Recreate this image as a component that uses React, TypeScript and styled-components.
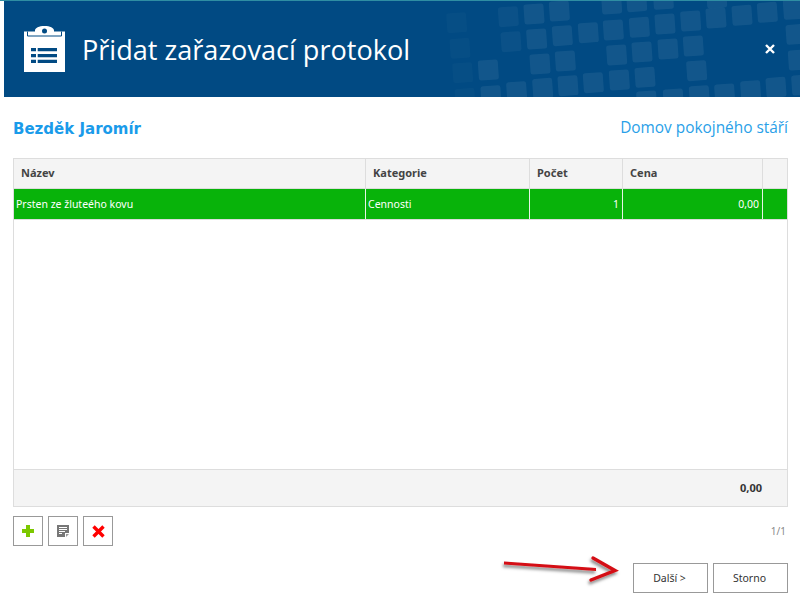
import styled, { createGlobalStyle } from "styled-components";

const squares: [number, number][] = [
  [80, 68], [235, 50], [312, 42], [388, 33], [545, 12], [620, 5], [700, -2], [860, -6],
  [475, 98], [550, 90], [628, 82], [705, 72], [782, 63], [858, 54], [936, 46], [1012, 37], [1090, 28],
  [90, 145], [243, 125], [320, 117], [397, 107], [1098, 103],
  [560, 165], [636, 156], [714, 147], [790, 138],
  [98, 218], [175, 210], [330, 192], [406, 183], [1105, 180],
  [800, 212],
  [260, 275], [338, 265], [414, 257], [490, 248], [568, 240], [645, 232],
  [105, 295], [183, 287], [650, 303], [730, 297], [808, 287], [884, 282], [962, 272], [1038, 262], [1115, 255],
];

const Global = createGlobalStyle`
  html, body {
    margin: 0;
    background: #fff;
  }
  body {
    font-family: "Noto Sans", "Liberation Sans", sans-serif;
    font-size: 10.5px;
    color: #333;
  }
`;

const App = () => {
  return (
    <>
      <Global />
      <Page>
        <Header>
          <Pattern viewBox="0 0 370 96" width="370" height="96">
            {squares.map(([x, y]) => (
              <rect
                key={`${x}-${y}`}
                x={x / 3 - 10}
                y={y / 3 - 11}
                width="20"
                height="20"
                rx="2.5"
                fill="#fff"
                opacity={x < 120 ? 0.025 : x < 300 && y < 130 ? 0.045 : 0.07}
                transform={`rotate(-4 ${x / 3} ${y / 3 - 1})`}
              />
            ))}
          </Pattern>
          <ClipboardIcon />
          <Title>Přidat zařazovací protokol</Title>
          <CloseButton>
            <svg width="10" height="10" viewBox="0 0 10 10">
              <path d="M1 1 9 9M9 1 1 9" stroke="#fff" strokeWidth="2.4" />
            </svg>
          </CloseButton>
        </Header>
        <Content>
          <InfoRow>
            <PersonName>Bezděk Jaromír</PersonName>
            <Facility>Domov pokojného stáří</Facility>
          </InfoRow>
          <TablePanel>
            <HeadRow>
              <HeadCell>Název</HeadCell>
              <HeadCell>Kategorie</HeadCell>
              <HeadCell>Počet</HeadCell>
              <HeadCell>Cena</HeadCell>
              <HeadCell />
            </HeadRow>
            <DataRow>
              <DataCell>Prsten ze žluteého kovu</DataCell>
              <DataCell>Cennosti</DataCell>
              <DataCell $right>1</DataCell>
              <DataCell $right>0,00</DataCell>
              <DataCell />
            </DataRow>
            <TableBody />
            <Summary>0,00</Summary>
          </TablePanel>
          <Toolbar>
            <IconButton aria-label="Přidat">
              <svg width="12" height="12" viewBox="0 0 12 12">
                <path d="M4 0h4v4h4v4H8v4H4V8H0V4h4z" fill="#7cc800" />
              </svg>
            </IconButton>
            <IconButton aria-label="Upravit">
              <svg width="12" height="12" viewBox="0 0 12 12">
                <path d="M0 0h12v8L8 12H0z" fill="#777" />
                <path d="M2 2h8v1H2zM2 4h8v1H2zM2 6h6v1H2zM2 8h3v1H2z" fill="#fff" />
                <path d="M8 12V8h4v1H9v3z" fill="#fff" />
                <path d="M9 9h3l-3 3z" fill="#999" />
              </svg>
            </IconButton>
            <IconButton aria-label="Smazat">
              <svg width="13" height="13" viewBox="0 0 13 13">
                <path d="M1.500 1.500 11.500 11.500M11.500 1.500 1.500 11.500" stroke="#f00" strokeWidth="3.400" />
              </svg>
            </IconButton>
            <PageInfo>1/1</PageInfo>
          </Toolbar>
          <Footer>
            <Arrow viewBox="0 0 124 36" width="124" height="36">
              <defs>
                <filter id="arrow-shadow" x="-10%" y="-30%" width="120%" height="170%">
                  <feDropShadow dx="-1" dy="2.500" stdDeviation="1.800" floodColor="#000" floodOpacity="0.5" />
                </filter>
              </defs>
              <g filter="url(#arrow-shadow)">
                <path d="M5 6.500 L97 13 L97 16 L5 9.500 Z" fill="#d40d12" />
                <path
                  d="M94 3 L116 15.500 L92 25"
                  fill="none"
                  stroke="#d40d12"
                  strokeWidth="3.400"
                  strokeLinecap="round"
                />
              </g>
            </Arrow>
            <ActionButton>Další &gt;</ActionButton>
            <ActionButton>Storno</ActionButton>
          </Footer>
        </Content>
      </Page>
    </>
  );
};

export default App;

const ClipboardIcon = () => (
  <ClipboardSvg viewBox="0 0 41 46" width="41" height="46">
    <path d="M0 5.500h11V4.500C11 2 15 0 20.500 0S30 2 30 4.500v1h11V46H0z" fill="#fff" />
    <circle cx="20.500" cy="5" r="2.500" fill="#014a83" />
    <path d="M3.500 5.500v4.500h34V5.500" fill="none" stroke="#014a83" strokeWidth="1" />
    <path
      d="M7 22h5v3.300H7zM13.700 22H33v3.300H13.700zM7 28h5v3.300H7zM13.700 28H33v3.300H13.700zM7 33.700h5V37H7zM13.700 33.700H33V37H13.700z"
      fill="#014a83"
    />
  </ClipboardSvg>
);

const Page = styled.div`
  width: 800px;
  height: 603px;
  box-sizing: border-box;
  border-top: 1px solid #2f8ea3;
  overflow: hidden;
  position: relative;
`;

const Header = styled.header`
  position: relative;
  height: 96px;
  margin-left: 4px;
  padding-left: 20px;
  display: flex;
  align-items: center;
  background: #014a83;
  overflow: hidden;
`;

const Pattern = styled.svg`
  position: absolute;
  top: 0;
  right: 0;
`;

const ClipboardSvg = styled.svg`
  position: relative;
  flex: none;
  margin-right: 17px;
`;

const Title = styled.h1`
  position: relative;
  margin: 0;
  font-family: "Open Sans", "Noto Sans", sans-serif;
  font-size: 27.100px;
  font-weight: 400;
  color: #fff;
`;

const CloseButton = styled.button`
  position: relative;
  margin-left: auto;
  margin-right: 25px;
  padding: 0;
  border: 0;
  background: none;
  width: 10px;
  height: 10px;
  display: flex;
`;

const Content = styled.main`
  padding: 0 12px 0 13px;
`;

const InfoRow = styled.div`
  height: 61px;
  display: flex;
  align-items: center;
  justify-content: space-between;
`;

const PersonName = styled.div`
  padding-top: 2px;
  font-family: "DejaVu Sans", sans-serif;
  font-size: 15px;
  font-weight: 700;
  color: #1a9bea;
`;

const Facility = styled.div`
  font-family: "Open Sans", "Noto Sans", sans-serif;
  font-size: 15.400px;
  color: #2a9fe8;
`;

const TablePanel = styled.div`
  height: 349px;
  box-sizing: border-box;
  border: 1px solid #ddd;
  display: flex;
  flex-direction: column;
`;

const columns = "352px 164px 93px 140px 1fr";

const HeadRow = styled.div`
  display: grid;
  grid-template-columns: ${columns};
  height: 30px;
  box-sizing: border-box;
  border-bottom: 1px solid #ddd;
  background: #f4f4f4;
`;

const HeadCell = styled.div`
  display: flex;
  align-items: center;
  padding: 0 0 2px 7px;
  border-right: 1px solid #ddd;
  font-size: 11px;
  font-weight: 700;
  color: #444;
  &:last-child {
    border-right: 0;
  }
`;

const DataRow = styled.div`
  display: grid;
  grid-template-columns: ${columns};
  height: 31px;
  box-sizing: border-box;
  border-bottom: 1px solid #ddd;
  background: #08b30a;
`;

const DataCell = styled.div<{ $right?: boolean }>`
  display: flex;
  align-items: center;
  justify-content: ${(p) => (p.$right ? "flex-end" : "flex-start")};
  padding: 0 ${(p) => (p.$right ? "3px" : "2px")} 1px 2px;
  border-right: 1px solid #e6f5e6;
  color: #fff;
  &:last-child {
    border-right: 0;
  }
`;

const TableBody = styled.div`
  flex: 1;
`;

const Summary = styled.div`
  height: 37px;
  box-sizing: border-box;
  padding: 0 25px 1px 0;
  border-top: 1px solid #ddd;
  background: #f4f4f4;
  display: flex;
  align-items: center;
  justify-content: flex-end;
  font-size: 11px;
  font-weight: 700;
  color: #333;
`;

const Toolbar = styled.div`
  margin-top: 9px;
  display: flex;
  align-items: center;
  gap: 5px;
`;

const IconButton = styled.button`
  width: 30px;
  height: 30px;
  padding: 0;
  box-sizing: border-box;
  border: 1px solid #999;
  background: #fff;
  display: flex;
  align-items: center;
  justify-content: center;
`;

const PageInfo = styled.div`
  margin-left: auto;
  margin-right: 2px;
  font-size: 10px;
  color: #888;
`;

const Footer = styled.div`
  position: relative;
  margin-top: 17px;
  display: flex;
  justify-content: flex-end;
  gap: 5px;
`;

const Arrow = styled.svg`
  position: absolute;
  left: 486px;
  top: -8px;
`;

const ActionButton = styled.button`
  width: 75px;
  height: 30px;
  padding: 0 2px 0 0;
  box-sizing: border-box;
  border: 1px solid #999;
  background: #fff;
  font-family: inherit;
  font-size: 10.500px;
  color: #333;
`;
